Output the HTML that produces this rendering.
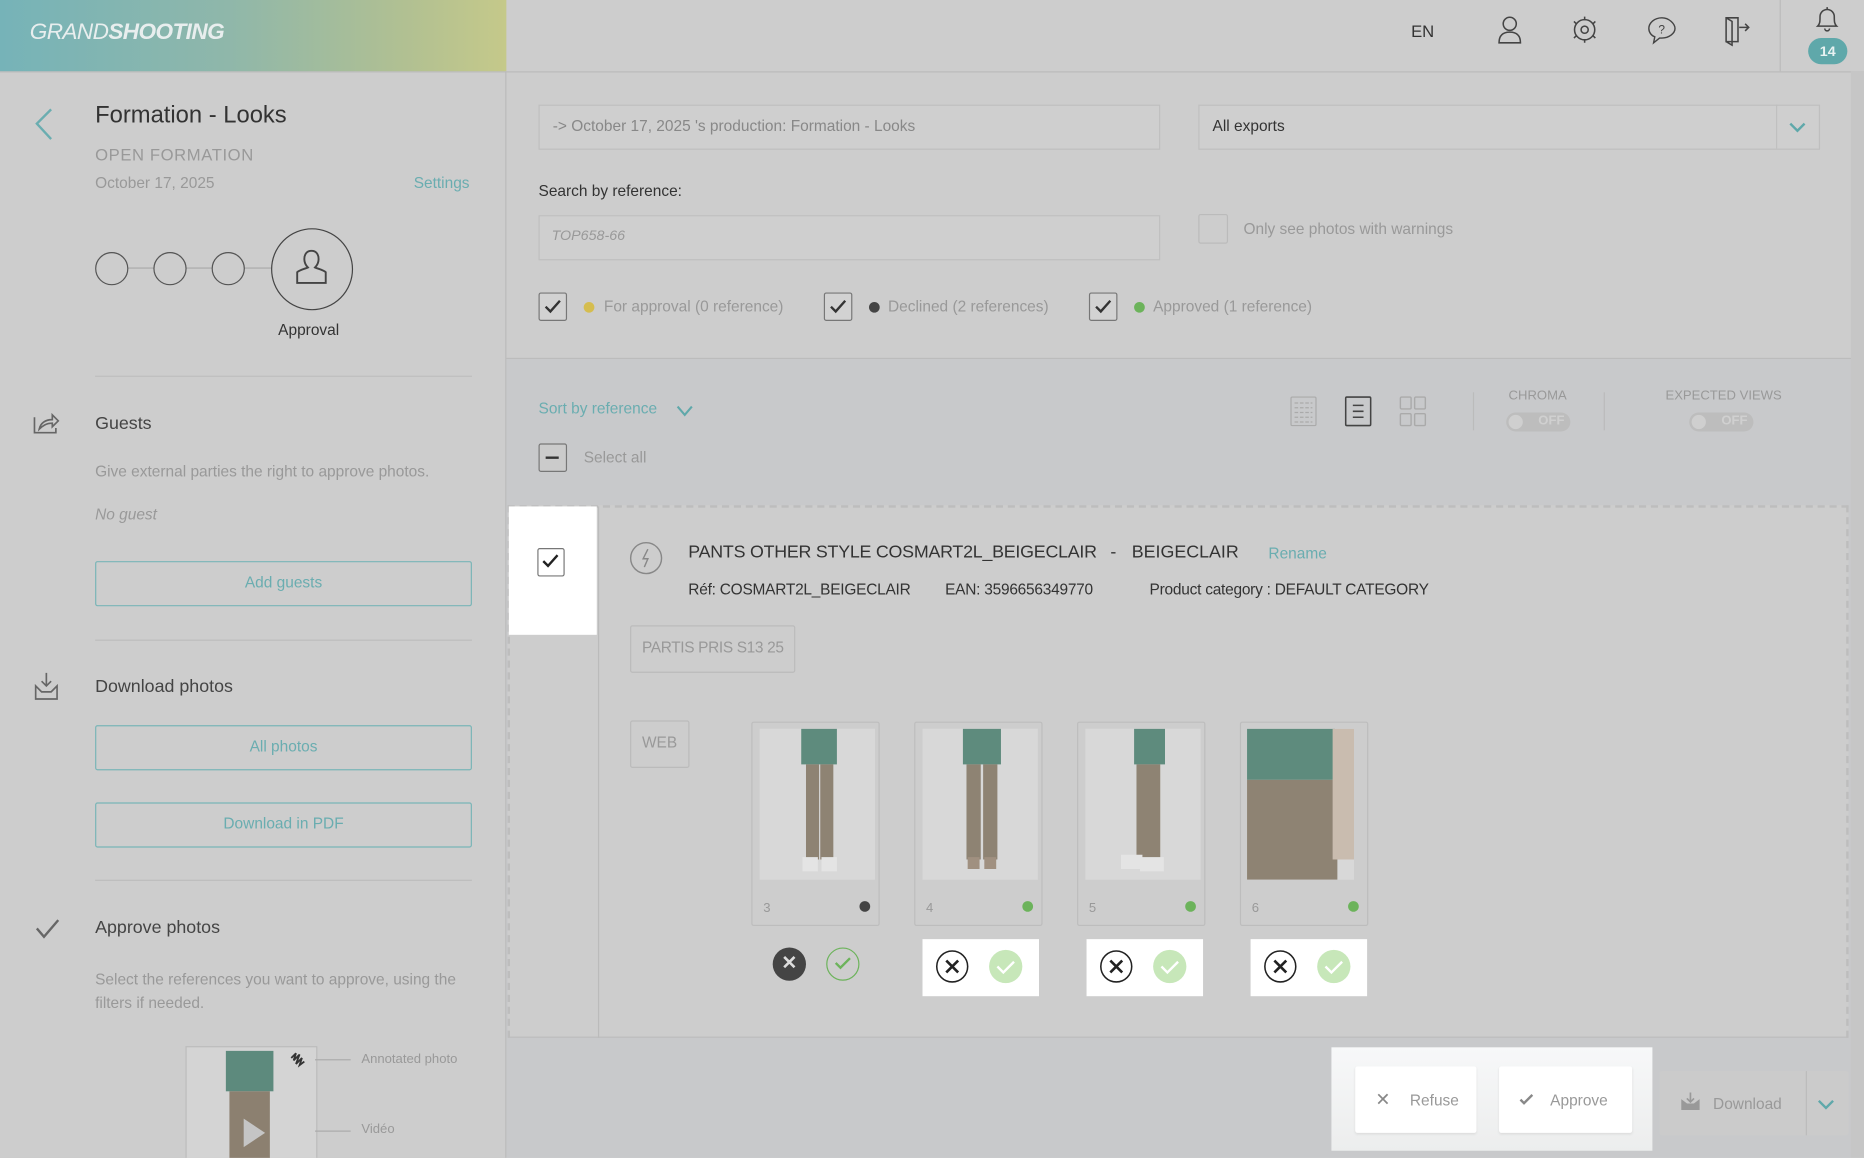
<!DOCTYPE html>
<html><head><meta charset="utf-8"><style>
html,body{margin:0;padding:0;width:1864px;height:1158px;overflow:hidden;background:#cdcdcd}
#w{position:absolute;left:0;top:0;width:1568px;height:974px;transform:scale(1.18878);transform-origin:0 0;font-family:"Liberation Sans",sans-serif;background:#cdcdcd;overflow:hidden}
.a{position:absolute}
.t{position:absolute;white-space:nowrap;line-height:1}
.btn{position:absolute;border:1.5px solid #79b5b7;border-radius:2px;color:#6aadb0;font-size:13px;text-align:center;box-sizing:border-box}
.hr{position:absolute;height:1px;background:#bdbdbd}
.cb{position:absolute;width:22px;height:22px;border:1.3px solid #777;border-radius:2px;background:#d2d2d2}
.dot{position:absolute;width:9px;height:9px;border-radius:50%}
.pc{position:absolute;width:108px;height:172px;border:1px solid #bdbdbd;border-radius:2px;box-sizing:border-box;background:#cdcdcd}
.img{position:absolute;left:6px;top:5px;width:97px;height:127px;background:#d8d8d8;overflow:hidden}
.wb{position:absolute;width:98px;height:48px;background:#fff}
</style></head><body><div id="w">
<div class="a" style="left:0;top:0;width:426px;height:60px;background:linear-gradient(90deg,#76b3b8 0%,#8fb7aa 45%,#b1c092 80%,#c5c98a 100%)"></div>
<div class="t" style="left:25px;top:18px;font-size:19px;color:#e8eeee;font-style:italic;letter-spacing:-0.5px"><span style="font-weight:300">GRAND</span><b>SHOOTING</b></div>
<div class="a" style="left:426px;top:0;width:1142px;height:60px;background:#cdcdcd;border-bottom:1px solid #bbb"></div>
<div class="a" style="left:0;top:60px;width:426px;height:1px;background:#bbb"></div>
<div class="t" style="left:1187px;top:19px;font-size:14px;color:#333">EN</div>
<svg class="a" style="left:1258px;top:12px" width="24" height="26" viewBox="0 0 24 26" fill="none" stroke="#444" stroke-width="1.3"><circle cx="12" cy="8" r="5.5"/><path d="M3 24 Q3 15 12 15 Q21 15 21 24 Z"/></svg>
<svg class="a" style="left:1321px;top:12px" width="24" height="26" viewBox="0 0 24 26" fill="none" stroke="#444" stroke-width="1.3"><circle cx="12" cy="13" r="8.5"/><circle cx="12" cy="13" r="3"/><path d="M12 2v3M12 21v3M3 6l2 2M19 18l2 2M21 6l-2 2M5 18l-2 2"/></svg>
<svg class="a" style="left:1385px;top:13px" width="26" height="26" viewBox="0 0 26 26" fill="none" stroke="#444" stroke-width="1.2"><path d="M13 2C7 2 2 6 2 11c0 3 2 6 5 7l-1 5 5-4h2c6 0 11-4 11-8S19 2 13 2z"/><text x="10" y="15" font-size="10" fill="#444" stroke="none" font-family="Liberation Sans">?</text></svg>
<svg class="a" style="left:1448px;top:11px" width="26" height="28" viewBox="0 0 26 28" fill="none" stroke="#444" stroke-width="1.3"><path d="M4 4h10v20H4zM4 4l5 3v20l-5-3"/><path d="M15 12h8M20 9l3 3-3 3"/></svg>
<div class="a" style="left:1497px;top:0;width:1px;height:60px;background:#bbb"></div>
<svg class="a" style="left:1525px;top:3px" width="24" height="26" viewBox="0 0 24 26" fill="none" stroke="#444" stroke-width="1.3"><path d="M4 19c2-2 2-4 2-8a6 6 0 0112 0c0 4 0 6 2 8zM10 21a2 2 0 004 0M12 3v2"/></svg>
<div class="a" style="left:1521px;top:32px;width:33px;height:22px;border-radius:11px;background:#5fa8aa;color:#e8f2f2;font-size:12px;font-weight:bold;text-align:center;line-height:22px">14</div>

<div class="a" style="left:425px;top:60px;width:1px;height:914px;background:#bbb"></div>
<svg class="a" style="left:28px;top:90px" width="18" height="30" viewBox="0 0 18 30" fill="none" stroke="#6aadb0" stroke-width="2"><path d="M15 2L3 14l12 13"/></svg>
<div class="t" style="left:80px;top:87px;font-size:20px;color:#333">Formation - Looks</div>
<div class="t" style="left:80px;top:123px;font-size:14px;color:#999;letter-spacing:0.5px">OPEN FORMATION</div>
<div class="t" style="left:80px;top:147px;font-size:13px;color:#999">October 17, 2025</div>
<div class="t" style="left:348px;top:147px;font-size:13px;color:#6aadb0">Settings</div>
<div class="a" style="left:94px;top:225px;width:140px;height:1px;background:#aaa"></div>
<div class="a" style="left:80px;top:212px;width:26px;height:26px;border:1.3px solid #555;border-radius:50%;background:#cdcdcd"></div>
<div class="a" style="left:129px;top:212px;width:26px;height:26px;border:1.3px solid #555;border-radius:50%;background:#cdcdcd"></div>
<div class="a" style="left:178px;top:212px;width:26px;height:26px;border:1.3px solid #555;border-radius:50%;background:#cdcdcd"></div>
<div class="a" style="left:228px;top:192px;width:67px;height:67px;border:1.3px solid #444;border-radius:50%;background:#cdcdcd"></div>
<svg class="a" style="left:246px;top:208px" width="32" height="34" viewBox="0 0 32 34" fill="none" stroke="#444" stroke-width="1.6"><path d="M16 3c-4 0-6 3-6 7 0 3 1 5 3 7-2 1-7 2-9 4v9h24v-9c-2-2-7-3-9-4 2-2 3-4 3-7 0-4-2-7-6-7z"/></svg>
<div class="t" style="left:234px;top:271px;font-size:13px;color:#333">Approval</div>
<div class="hr" style="left:80px;top:316px;width:317px"></div>

<svg class="a" style="left:27px;top:345px" width="24" height="22" viewBox="0 0 24 22" fill="none" stroke="#666" stroke-width="1.4"><path d="M2 6v13h18v-4M6 16c1-5 5-8 11-8V4l5 5-5 5v-3c-5 0-8 2-11 5z"/></svg>
<div class="t" style="left:80px;top:349px;font-size:15px;color:#444">Guests</div>
<div class="t" style="left:80px;top:390px;font-size:13px;color:#999">Give external parties the right to approve photos.</div>
<div class="t" style="left:80px;top:426px;font-size:13px;color:#999;font-style:italic">No guest</div>
<div class="btn" style="left:80px;top:472px;width:317px;height:38px;line-height:34px">Add guests</div>
<div class="hr" style="left:80px;top:538px;width:317px"></div>

<svg class="a" style="left:27px;top:564px" width="24" height="26" viewBox="0 0 24 26" fill="none" stroke="#666" stroke-width="1.4"><path d="M3 13v11h18V13l-5 5H8zM12 2v11M8 9l4 4 4-4"/></svg>
<div class="t" style="left:80px;top:570px;font-size:15px;color:#444">Download photos</div>
<div class="btn" style="left:80px;top:610px;width:317px;height:38px;line-height:34px">All photos</div>
<div class="btn" style="left:80px;top:675px;width:317px;height:38px;line-height:34px">Download in PDF</div>
<div class="hr" style="left:80px;top:740px;width:317px"></div>

<svg class="a" style="left:29px;top:771px" width="22" height="20" viewBox="0 0 22 20" fill="none" stroke="#666" stroke-width="2"><path d="M2 10l6 7L20 3"/></svg>
<div class="t" style="left:80px;top:773px;font-size:15px;color:#444">Approve photos</div>
<div class="t" style="left:80px;top:814px;font-size:13px;color:#999;line-height:20px">Select the references you want to approve, using the<br>filters if needed.</div>
<div class="a" style="left:156px;top:880px;width:109px;height:100px;border:1px solid #bbb;background:#d4d4d4;overflow:hidden">
 <div class="a" style="left:33px;top:3px;width:40px;height:34px;background:#5d8a7d"></div>
 <div class="a" style="left:36px;top:37px;width:34px;height:60px;background:#8c8070"></div>
 <div class="a" style="left:48px;top:60px;width:0;height:0;border-left:18px solid #c5c5c5;border-top:12px solid transparent;border-bottom:12px solid transparent"></div>
</div>
<svg class="a" style="left:243px;top:884px" width="20" height="16" viewBox="0 0 20 16" fill="none" stroke="#333" stroke-width="1.5"><path d="M2 6l4-4-2 6 5-5-3 8 5-5-2 6 4-3"/></svg>
<div class="a" style="left:265px;top:891px;width:30px;height:1px;background:#aaa"></div>
<div class="a" style="left:265px;top:951px;width:30px;height:1px;background:#aaa"></div>
<div class="t" style="left:304px;top:886px;font-size:11px;color:#999">Annotated photo</div>
<div class="t" style="left:304px;top:945px;font-size:11px;color:#999">Vidéo</div>

<div class="a" style="left:426px;top:301px;width:1142px;height:1px;background:#bcbcbc"></div>
<div class="a" style="left:426px;top:302px;width:1131px;height:672px;background:#c8c9cb"></div>
<div class="a" style="left:453px;top:88px;width:521px;height:36px;border:1px solid #bfbfbf;background:#cfcfcf"></div>
<div class="t" style="left:465px;top:99px;font-size:13px;color:#888">-&gt; October 17, 2025 's production: Formation - Looks</div>
<div class="a" style="left:1008px;top:88px;width:521px;height:36px;border:1px solid #bfbfbf;background:#cfcfcf"></div>
<div class="a" style="left:1494px;top:88px;width:1px;height:37px;background:#bfbfbf"></div>
<div class="t" style="left:1020px;top:99px;font-size:13px;color:#333">All exports</div>
<svg class="a" style="left:1504px;top:102px" width="16" height="10" viewBox="0 0 16 10" fill="none" stroke="#5fa8aa" stroke-width="2"><path d="M2 2l6 6 6-6"/></svg>
<div class="t" style="left:453px;top:154px;font-size:13px;color:#333">Search by reference:</div>
<div class="a" style="left:453px;top:181px;width:521px;height:36px;border:1px solid #bfbfbf;background:#cfcfcf"></div>
<div class="t" style="left:464px;top:192px;font-size:12px;color:#999;font-style:italic">TOP658-66</div>
<div class="a" style="left:1008px;top:180px;width:23px;height:23px;border:1px solid #bbb;border-radius:2px"></div>
<div class="t" style="left:1046px;top:186px;font-size:13px;color:#999">Only see photos with warnings</div>
<div class="cb" style="left:453px;top:246px"></div><svg class="a" style="left:457px;top:251px" width="16" height="14" viewBox="0 0 16 14" fill="none" stroke="#333" stroke-width="2"><path d="M2 7l4 4 8-9"/></svg>
<div class="dot" style="left:491px;top:254px;background:#d5bd4f"></div>
<div class="t" style="left:508px;top:251px;font-size:13px;color:#999">For approval (0 reference)</div>
<div class="cb" style="left:693px;top:246px"></div><svg class="a" style="left:697px;top:251px" width="16" height="14" viewBox="0 0 16 14" fill="none" stroke="#333" stroke-width="2"><path d="M2 7l4 4 8-9"/></svg>
<div class="dot" style="left:731px;top:254px;background:#444"></div>
<div class="t" style="left:747px;top:251px;font-size:13px;color:#999">Declined (2 references)</div>
<div class="cb" style="left:916px;top:246px"></div><svg class="a" style="left:920px;top:251px" width="16" height="14" viewBox="0 0 16 14" fill="none" stroke="#333" stroke-width="2"><path d="M2 7l4 4 8-9"/></svg>
<div class="dot" style="left:954px;top:254px;background:#6cb35b"></div>
<div class="t" style="left:970px;top:251px;font-size:13px;color:#999">Approved (1 reference)</div>

<div class="t" style="left:453px;top:337px;font-size:13px;color:#6aadb0">Sort by reference</div>
<svg class="a" style="left:568px;top:340px" width="16" height="12" viewBox="0 0 16 12" fill="none" stroke="#5fa8aa" stroke-width="1.8"><path d="M2 2l6 7 6-7"/></svg>
<div class="cb" style="left:453px;top:373px;background:#cbcbcb"></div><div class="a" style="left:459px;top:384px;width:11px;height:2px;background:#333"></div>
<div class="t" style="left:491px;top:378px;font-size:13px;color:#999">Select all</div>
<svg class="a" style="left:1085px;top:333px" width="24" height="26" viewBox="0 0 24 26" fill="none" stroke="#aaa" stroke-width="1"><rect x="1" y="1" width="21" height="24" rx="1"/><path d="M4 6h15M4 10h15M4 14h15M4 18h15M4 22h15" stroke-dasharray="3 1.5"/></svg>
<svg class="a" style="left:1131px;top:333px" width="24" height="26" viewBox="0 0 24 26" fill="none" stroke="#444" stroke-width="1.3"><rect x="1" y="1" width="21" height="24" rx="1"/><path d="M7 8h9M7 13h9M7 18h9"/></svg>
<svg class="a" style="left:1177px;top:333px" width="24" height="26" viewBox="0 0 24 26" fill="none" stroke="#aaa" stroke-width="1.2"><rect x="1" y="1" width="9" height="10" rx="1"/><rect x="13" y="1" width="9" height="10" rx="1"/><rect x="1" y="15" width="9" height="10" rx="1"/><rect x="13" y="15" width="9" height="10" rx="1"/></svg>
<div class="a" style="left:1239px;top:330px;width:1px;height:32px;background:#bbb"></div>
<div class="a" style="left:1349px;top:330px;width:1px;height:32px;background:#bbb"></div>
<div class="t" style="left:1269px;top:328px;font-size:11px;color:#999">CHROMA</div>
<div class="a" style="left:1267px;top:347px;width:54px;height:16px;border-radius:8px;background:#bdbdbd"><div class="a" style="left:2px;top:2px;width:12px;height:12px;border-radius:50%;background:#cfcfcf"></div><div class="t" style="left:27px;top:2px;font-size:11px;color:#d0d0d0;font-weight:bold">OFF</div></div>
<div class="t" style="left:1401px;top:328px;font-size:11px;color:#999">EXPECTED VIEWS</div>
<div class="a" style="left:1421px;top:347px;width:54px;height:16px;border-radius:8px;background:#bdbdbd"><div class="a" style="left:2px;top:2px;width:12px;height:12px;border-radius:50%;background:#cfcfcf"></div><div class="t" style="left:27px;top:2px;font-size:11px;color:#d0d0d0;font-weight:bold">OFF</div></div>
<div class="a" style="left:1557px;top:60px;width:11px;height:914px;background:#c6c6c6"></div>

<div class="a" style="left:427px;top:425px;width:1128px;height:448px;border:2px dashed #bdbdbd;border-bottom:1px solid #bbb;box-sizing:border-box;background:#cdcdcd"></div>
<div class="a" style="left:428px;top:426px;width:74px;height:108px;background:#fff"></div>
<div class="a" style="left:503px;top:426px;width:1px;height:447px;background:#bbb"></div>
<div class="a" style="left:452px;top:461px;width:21px;height:22px;border:1px solid #777;border-radius:2px"></div>
<svg class="a" style="left:455px;top:465px" width="16" height="14" viewBox="0 0 16 14" fill="none" stroke="#222" stroke-width="2"><path d="M2 7l4 4 8-9"/></svg>
<svg class="a" style="left:529px;top:455px" width="29" height="29" viewBox="0 0 29 29" fill="none" stroke="#888" stroke-width="1.2"><circle cx="14.5" cy="14.5" r="13"/><path d="M16 7l-4 8h4l-3 7" /></svg>
<div class="t" style="left:579px;top:457px;font-size:15px;color:#333;letter-spacing:-0.2px">PANTS OTHER STYLE COSMART2L_BEIGECLAIR</div>
<div class="t" style="left:934px;top:457px;font-size:15px;color:#333">-</div>
<div class="t" style="left:952px;top:457px;font-size:15px;color:#333">BEIGECLAIR</div>
<div class="t" style="left:1067px;top:459px;font-size:13px;color:#6aadb0">Rename</div>
<div class="t" style="left:579px;top:489px;font-size:13px;color:#333;letter-spacing:-0.2px">Réf: COSMART2L_BEIGECLAIR</div>
<div class="t" style="left:795px;top:489px;font-size:13px;color:#333;letter-spacing:-0.2px">EAN: 3596656349770</div>
<div class="t" style="left:967px;top:489px;font-size:13px;color:#333;letter-spacing:-0.2px">Product category : DEFAULT CATEGORY</div>
<div class="a" style="left:530px;top:526px;width:137px;height:38px;border:1px solid #bbb;border-radius:2px"></div>
<div class="t" style="left:540px;top:538px;font-size:13px;color:#999;letter-spacing:-0.3px">PARTIS PRIS S13 25</div>
<div class="a" style="left:530px;top:606px;width:48px;height:38px;border:1px solid #bbb;border-radius:2px"></div>
<div class="t" style="left:540px;top:618px;font-size:13px;color:#999">WEB</div>

<div class="pc" style="left:632px;top:607px"><div class="img"><div class="a" style="left:35px;top:0;width:30px;height:30px;background:#5e8b7d"></div><div class="a" style="left:39px;top:30px;width:11px;height:80px;background:#8e8373"></div><div class="a" style="left:51px;top:30px;width:11px;height:80px;background:#8e8373"></div><div class="a" style="left:36px;top:108px;width:13px;height:12px;background:#e4e4e4"></div><div class="a" style="left:52px;top:108px;width:13px;height:12px;background:#e4e4e4"></div></div><div class="t" style="left:9px;top:151px;font-size:11px;color:#999">3</div><div class="dot" style="left:90px;top:150px;background:#444"></div></div>
<div class="pc" style="left:769px;top:607px"><div class="img"><div class="a" style="left:34px;top:0;width:32px;height:30px;background:#5e8b7d"></div><div class="a" style="left:37px;top:30px;width:12px;height:80px;background:#8e8373"></div><div class="a" style="left:51px;top:30px;width:12px;height:80px;background:#8e8373"></div><div class="a" style="left:38px;top:108px;width:10px;height:10px;background:#a09080"></div><div class="a" style="left:52px;top:108px;width:10px;height:10px;background:#a09080"></div></div><div class="t" style="left:9px;top:151px;font-size:11px;color:#999">4</div><div class="dot" style="left:90px;top:150px;background:#6cb35b"></div></div>
<div class="pc" style="left:906px;top:607px"><div class="img"><div class="a" style="left:41px;top:0;width:26px;height:30px;background:#5e8b7d"></div><div class="a" style="left:43px;top:30px;width:20px;height:80px;background:#8e8373"></div><div class="a" style="left:30px;top:106px;width:18px;height:12px;background:#e4e4e4"></div><div class="a" style="left:46px;top:108px;width:20px;height:12px;background:#e4e4e4"></div></div><div class="t" style="left:9px;top:151px;font-size:11px;color:#999">5</div><div class="dot" style="left:90px;top:150px;background:#6cb35b"></div></div>
<div class="pc" style="left:1043px;top:607px"><div class="img" style="left:5px;width:90px"><div class="a" style="left:0;top:0;width:74px;height:43px;background:#5e8b7d"></div><div class="a" style="left:0;top:43px;width:76px;height:84px;background:#8e8373"></div><div class="a" style="left:72px;top:0;width:18px;height:110px;background:#c9bcaf"></div></div><div class="t" style="left:9px;top:151px;font-size:11px;color:#999">6</div><div class="dot" style="left:90px;top:150px;background:#6cb35b"></div></div>

<div class="a" style="left:650px;top:797px;width:28px;height:28px;border-radius:50%;background:#444;color:#ddd;font-size:16px;text-align:center;line-height:28px;font-weight:bold">✕</div>
<div class="a" style="left:695px;top:797px;width:26px;height:26px;border-radius:50%;border:1.5px solid #6cb35b"></div>
<svg class="a" style="left:701px;top:804px" width="16" height="12" viewBox="0 0 16 12" fill="none" stroke="#6cb35b" stroke-width="2"><path d="M2 6l4 4 8-8"/></svg>
<div class="wb" style="left:776px;top:790px"></div>
<div class="wb" style="left:914px;top:790px"></div>
<div class="wb" style="left:1052px;top:790px"></div>
<svg class="a" style="left:776px;top:790px" width="400" height="48" viewBox="0 0 400 48" fill="none">
<g><circle cx="25" cy="23" r="13" stroke="#222" stroke-width="1.3"/><path d="M20 18l10 10M30 18l-10 10" stroke="#222" stroke-width="2.2"/><circle cx="70" cy="23" r="14" fill="#c7e7b9"/><path d="M63 23l5 5 9-9" stroke="#fff" stroke-width="2"/></g>
<g transform="translate(138 0)"><circle cx="25" cy="23" r="13" stroke="#222" stroke-width="1.3"/><path d="M20 18l10 10M30 18l-10 10" stroke="#222" stroke-width="2.2"/><circle cx="70" cy="23" r="14" fill="#c7e7b9"/><path d="M63 23l5 5 9-9" stroke="#fff" stroke-width="2"/></g>
<g transform="translate(276 0)"><circle cx="25" cy="23" r="13" stroke="#222" stroke-width="1.3"/><path d="M20 18l10 10M30 18l-10 10" stroke="#222" stroke-width="2.2"/><circle cx="70" cy="23" r="14" fill="#c7e7b9"/><path d="M63 23l5 5 9-9" stroke="#fff" stroke-width="2"/></g>
</svg>

<div class="a" style="left:1120px;top:881px;width:270px;height:87px;background:linear-gradient(#f7f8f9,#eceded)"></div>
<div class="a" style="left:1140px;top:897px;width:102px;height:56px;background:#fff;border-radius:2px;box-shadow:0 1px 2px #ddd"></div>
<div class="t" style="left:1157px;top:918px;font-size:15px;color:#888">✕</div>
<div class="t" style="left:1186px;top:919px;font-size:13px;color:#999">Refuse</div>
<div class="a" style="left:1261px;top:897px;width:112px;height:56px;background:#fff;border-radius:2px;box-shadow:0 1px 2px #ddd"></div>
<svg class="a" style="left:1278px;top:920px" width="12" height="10" viewBox="0 0 12 10" fill="none" stroke="#888" stroke-width="2"><path d="M1 5l3 3 7-7"/></svg>
<div class="t" style="left:1304px;top:919px;font-size:13px;color:#999">Approve</div>
<div class="a" style="left:1396px;top:901px;width:159px;height:54px;background:#cbcbcb;border-radius:2px"></div>
<div class="a" style="left:1519px;top:901px;width:1px;height:54px;background:#bbb"></div>
<svg class="a" style="left:1413px;top:918px" width="18" height="16" viewBox="0 0 18 16" fill="#999" stroke="#999" stroke-width="1.4"><path d="M2 8v7h14V8l-4 3H6z"/><path d="M9 1v8M6 6l3 3 3-3" fill="none"/></svg>
<div class="t" style="left:1441px;top:922px;font-size:13px;color:#999">Download</div>
<svg class="a" style="left:1528px;top:924px" width="16" height="10" viewBox="0 0 16 10" fill="none" stroke="#5fa8aa" stroke-width="2"><path d="M2 2l6 6 6-6"/></svg>
</div></body></html>
